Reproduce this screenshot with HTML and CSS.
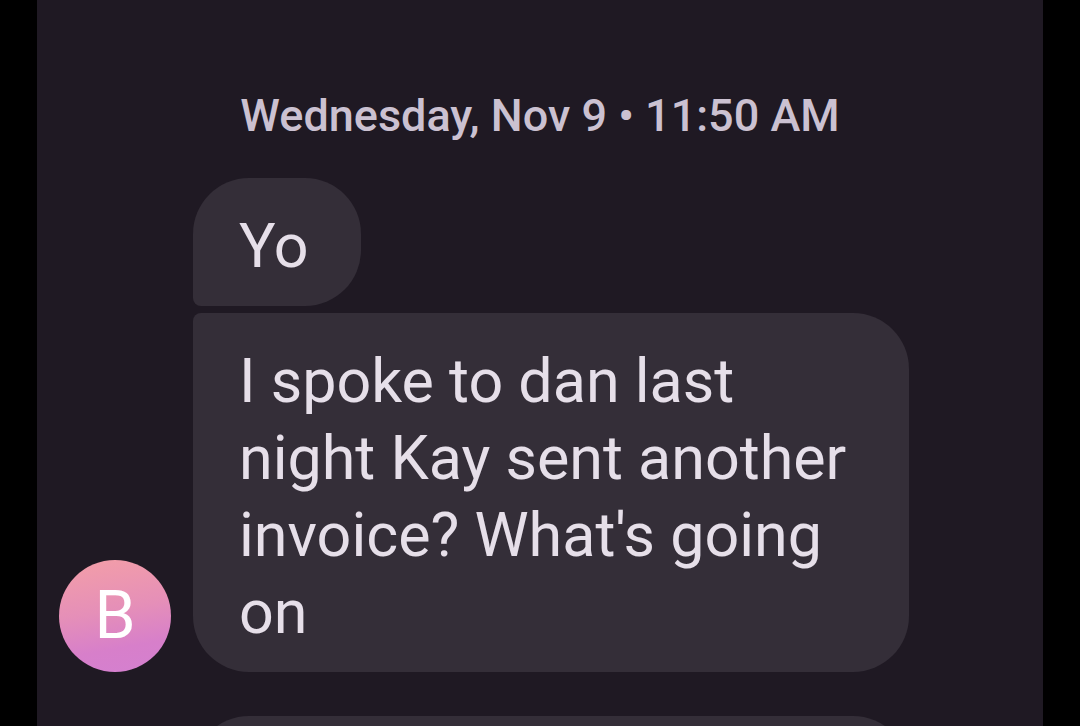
FILE: index.html
```html
<!DOCTYPE html>
<html lang="en">
<head>
<meta charset="utf-8">
<meta name="viewport" content="width=device-width, initial-scale=1">
<title>Messages</title>
<link rel="stylesheet" href="styles.css">
</head>
<body>
<main class="conversation">
  <time class="timestamp">Wednesday, Nov 9 • 11:50 AM</time>
  <section class="thread">
    <div class="avatar" aria-hidden="true">B</div>
    <div class="messages">
      <p class="bubble bubble-first">Yo</p>
      <p class="bubble bubble-last">I spoke to dan last night Kay sent another invoice? What's going on</p>
    </div>
  </section>
  <div class="next-message"></div>
</main>
</body>
</html>
```
FILE: styles.css
```css
* {
  box-sizing: border-box;
}

body {
  margin: 0;
  background: #000;
  font-family: Roboto, "Noto Sans", sans-serif;
}

.conversation {
  display: flex;
  flex-direction: column;
  height: 100vh;
  margin: 0 37px;
  padding: 90px 134px 0 22px;
  overflow: hidden;
  background: #1f1923;
}

.timestamp {
  align-self: center;
  margin-left: 112px;
  color: #cbc1d1;
  font-size: 45px;
  font-weight: 500;
  line-height: 52px;
  white-space: nowrap;
}

.thread {
  display: flex;
  flex-shrink: 0;
  align-items: flex-end;
  gap: 22px;
  margin-top: 36px;
}

.avatar {
  flex: none;
  width: 112px;
  height: 112px;
  border-radius: 50%;
  background: linear-gradient(170deg, #f29da9 5%, #e58fb8 45%, #d77fca 75%, #d480d0);
  color: #fff;
  font-size: 66px;
  line-height: 112px;
  text-align: center;
}

.messages {
  display: flex;
  flex: 1;
  flex-direction: column;
  align-items: flex-start;
  gap: 7px;
}

.bubble {
  margin: 0;
  padding: 30px 46px 21px;
  background: #342e38;
  color: #e6dfe9;
  font-size: 61px;
  line-height: 77px;
}

.bubble-first {
  min-width: 168px;
  border-radius: 56px 56px 56px 8px;
}

.bubble-last {
  width: 100%;
  border-radius: 8px 56px 56px 56px;
}

.next-message {
  flex: none;
  height: 120px;
  margin: 44px 0 0 134px;
  border-radius: 56px 56px 56px 8px;
  background: #342e38;
}
```
